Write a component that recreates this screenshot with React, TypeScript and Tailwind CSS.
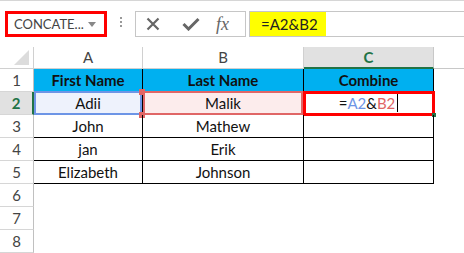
import React from 'react';

const ROWS = [
  { n: 1, a: 'First Name', b: 'Last Name', c: 'Combine' },
  { n: 2, a: 'Adii', b: 'Malik', c: '' },
  { n: 3, a: 'John', b: 'Mathew', c: '' },
  { n: 4, a: 'jan', b: 'Erik', c: '' },
  { n: 5, a: 'Elizabeth', b: 'Johnson', c: '' },
];

function Handle({ className }: { className: string }) {
  return <span className={`absolute h-[6px] w-[6px] bg-[#e06666] ${className}`} />;
}

function FormulaBar() {
  return (
    <div className="flex h-[47px] items-start border-t border-[#d6d6d6] pt-[10px]">
      <div className="ml-[5px] flex h-[26px] w-[102px] items-center border-[3px] border-[#ff0000] pl-[6px] pr-[8px]">
        <span className="flex-1 text-[13px] leading-none text-[#444]">CONCATE...</span>
        <span className="h-0 w-0 border-x-[4px] border-t-[5px] border-x-transparent border-t-[#888]" />
      </div>
      <div className="ml-[13px] mt-[6px] flex flex-col gap-[2px]">
        <span className="h-[2px] w-[2px] bg-[#999]" />
        <span className="h-[2px] w-[2px] bg-[#999]" />
        <span className="h-[2px] w-[2px] bg-[#999]" />
      </div>
      <div className="ml-[13px] flex h-[26px] w-[111px] items-center border border-[#c6c6c6] bg-white">
        <svg width="14" height="14" viewBox="0 0 14 14" className="ml-[10px]">
          <path d="M1.5 1.5 L12.5 12.5 M12.5 1.5 L1.5 12.5" stroke="#666" strokeWidth="2.2" />
        </svg>
        <svg width="18" height="14" viewBox="0 0 18 14" className="ml-[22px]">
          <path d="M1.5 7 L6.5 12 L16.5 2" stroke="#666" strokeWidth="3" fill="none" />
        </svg>
        <span className="ml-[16px] font-['Liberation_Serif',serif] text-[18px] italic leading-none text-[#666]">
          fx
        </span>
      </div>
      <div className="ml-[3px] flex h-[26px] flex-1 items-stretch border-y border-l border-[#c6c6c6] bg-white">
        <div className="flex w-[76px] items-center bg-[#ffff00] pl-[11px] text-[15px] text-[#222]">
          =A2&amp;B2
        </div>
      </div>
    </div>
  );
}

export default function App() {
  return (
    <div className="h-[253px] w-[464px] overflow-hidden bg-white font-['Lato','Liberation_Sans',sans-serif]">
      <FormulaBar />
      <div className="grid grid-cols-[34px_109px_161px_130px_1fr] grid-rows-[22px_repeat(8,23px)]">
        {/* column header row */}
        <div className="relative border-b border-r border-[#d0d0d0]">
          <span className="absolute bottom-[3px] right-[4px] h-0 w-0 border-b-[15px] border-l-[15px] border-b-[#dcdcdc] border-l-transparent" />
        </div>
        <div className="flex items-center justify-center border-b border-r border-[#d0d0d0] text-[15px] text-[#444]">A</div>
        <div className="flex items-center justify-center border-b border-r border-[#d0d0d0] text-[15px] text-[#444]">B</div>
        <div className="flex items-center justify-center border-b-2 border-r border-b-[#217346] border-r-[#c8c8c8] bg-[#e1e1e1] text-[15px] font-bold text-[#217346]">
          C
        </div>
        <div className="border-b border-[#c8c8c8]" />

        {ROWS.map((r) => {
          const selected = r.n === 2;
          const header = r.n === 1;
          const cell = 'flex items-center justify-center border-b border-r border-black text-[15px] text-[#111]';
          const bg = header ? 'bg-[#00b0f0] font-bold' : '';
          return (
            <React.Fragment key={r.n}>
              <div
                className={`flex items-center justify-center border-b border-[#d6d6d6] text-[15px] ${
                  selected
                    ? 'border-r-2 border-r-[#217346] bg-[#e1e1e1] font-bold text-[#217346]'
                    : 'border-r border-r-[#c0c0c0] text-[#444]'
                }`}
              >
                {r.n}
              </div>
              <div className={`relative ${cell} ${bg} ${selected ? 'bg-[#eef2fc]' : ''}`}>
                {selected && (
                  <span className="absolute inset-x-0 -top-[1px] -bottom-[1px] border-2 border-[#6d95e6]" />
                )}
                <span className="relative">{r.a}</span>
              </div>
              <div className={`relative ${cell} ${bg} ${selected ? 'bg-[#fcecec]' : ''}`}>
                {selected && (
                  <>
                    <span className="absolute inset-x-0 -top-[1px] -bottom-[1px] border-2 border-[#e06666]" />
                    <Handle className="-left-[4px] -top-[3px]" />
                    <Handle className="-bottom-[4px] -left-[4px]" />
                  </>
                )}
                <span className="relative">{r.b}</span>
              </div>
              <div className={`relative ${cell} ${bg}`}>
                {selected && (
                  <>
                    <span className="absolute -bottom-[2px] -left-[1px] -right-[2px] -top-[1px] border-[3px] border-[#ff0000]" />
                    <span className="absolute -bottom-[3px] -right-[3px] h-[4px] w-[4px] bg-[#217346]" />
                    <span className="relative flex items-center">
                      <span>=</span>
                      <span className="text-[#6d95e6]">A2</span>
                      <span>&amp;</span>
                      <span className="text-[#e06666]">B2</span>
                      <span className="ml-[2px] h-[18px] w-px bg-black" />
                    </span>
                  </>
                )}
                {r.c}
              </div>
              <div />
            </React.Fragment>
          );
        })}

        {[6, 7, 8].map((n) => (
          <React.Fragment key={n}>
            <div className="flex items-center justify-center border-b border-r border-b-[#d6d6d6] border-r-[#c0c0c0] text-[15px] text-[#444]">
              {n}
            </div>
            <div />
            <div />
            <div />
            <div />
          </React.Fragment>
        ))}
      </div>
    </div>
  );
}
